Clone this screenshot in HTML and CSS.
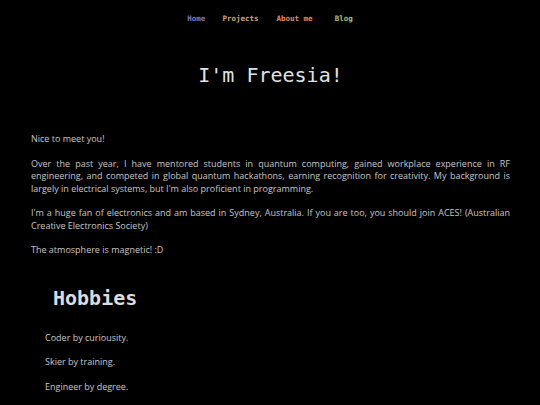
FILE: index.html
```html
<!DOCTYPE html>
<html lang="en">
<head>
<meta charset="utf-8">
<title>Freesia</title>
<link rel="stylesheet" href="styles.css">
</head>
<body>
<nav class="nav">
  <a class="nav-link home" href="#">Home</a>
  <a class="nav-link projects" href="#">Projects</a>
  <a class="nav-link about" href="#">About me</a>
  <a class="nav-link blog" href="#">Blog</a>
</nav>
<main class="content">
  <h1 class="title">I'm Freesia!</h1>
  <section class="intro">
    <p class="text">Nice to meet you!</p>
    <p class="text">Over the past year, I have mentored students in quantum computing, gained workplace experience in RF engineering, and competed in global quantum hackathons, earning recognition for creativity. My background is largely in electrical systems, but I'm also proficient in programming.</p>
    <p class="text">I'm a huge fan of electronics and am based in Sydney, Australia. If you are too, you should join ACES! (Australian Creative Electronics Society)</p>
    <p class="text">The atmosphere is magnetic! :D</p>
  </section>
  <h2 class="subtitle">Hobbies</h2>
  <section class="hobbies">
    <p class="text">Coder by curiousity.</p>
    <p class="text">Skier by training.</p>
    <p class="text">Engineer by degree.</p>
  </section>
</main>
</body>
</html>
```
FILE: styles.css
```css
html, body {
  margin: 0;
  padding: 0;
  background: #000;
}
body {
  color: #c6c6c6;
  font-family: "Open Sans", "Noto Sans", sans-serif;
}
.nav {
  display: flex;
  justify-content: center;
  gap: 17px;
  padding-top: 13px;
  height: 12px;
  line-height: 12px;
}
.nav-link {
  font-family: "DejaVu Sans Mono", monospace;
  font-size: 7.5px;
  font-weight: bold;
  text-decoration: none;
}
.home { color: #8178c4; }
.projects { color: #d4a96e; }
.about { color: #e08a5c; margin-left: 1px; }
.blog { color: #a5c185; margin-left: 5px; }

.content {
  padding: 0 30px 0 31px;
}
.title {
  margin: 38px 0 0;
  text-align: center;
  font-family: "DejaVu Sans Mono", monospace;
  font-weight: normal;
  font-size: 20px;
  line-height: 24px;
  color: #e2e2e2;
}
.intro {
  margin-top: 46px;
}
.text {
  margin: 0 0 12px;
  font-size: 9px;
  font-weight: 400;
  line-height: 12.5px;
  text-align: justify;
}
.subtitle {
  margin: 29px 0 0 22px;
  font-family: "DejaVu Sans Mono", monospace;
  font-weight: bold;
  font-size: 20px;
  line-height: 24px;
  color: #dcdcdc;
}
.hobbies {
  margin-top: 22px;
  padding-left: 14px;
}
```
